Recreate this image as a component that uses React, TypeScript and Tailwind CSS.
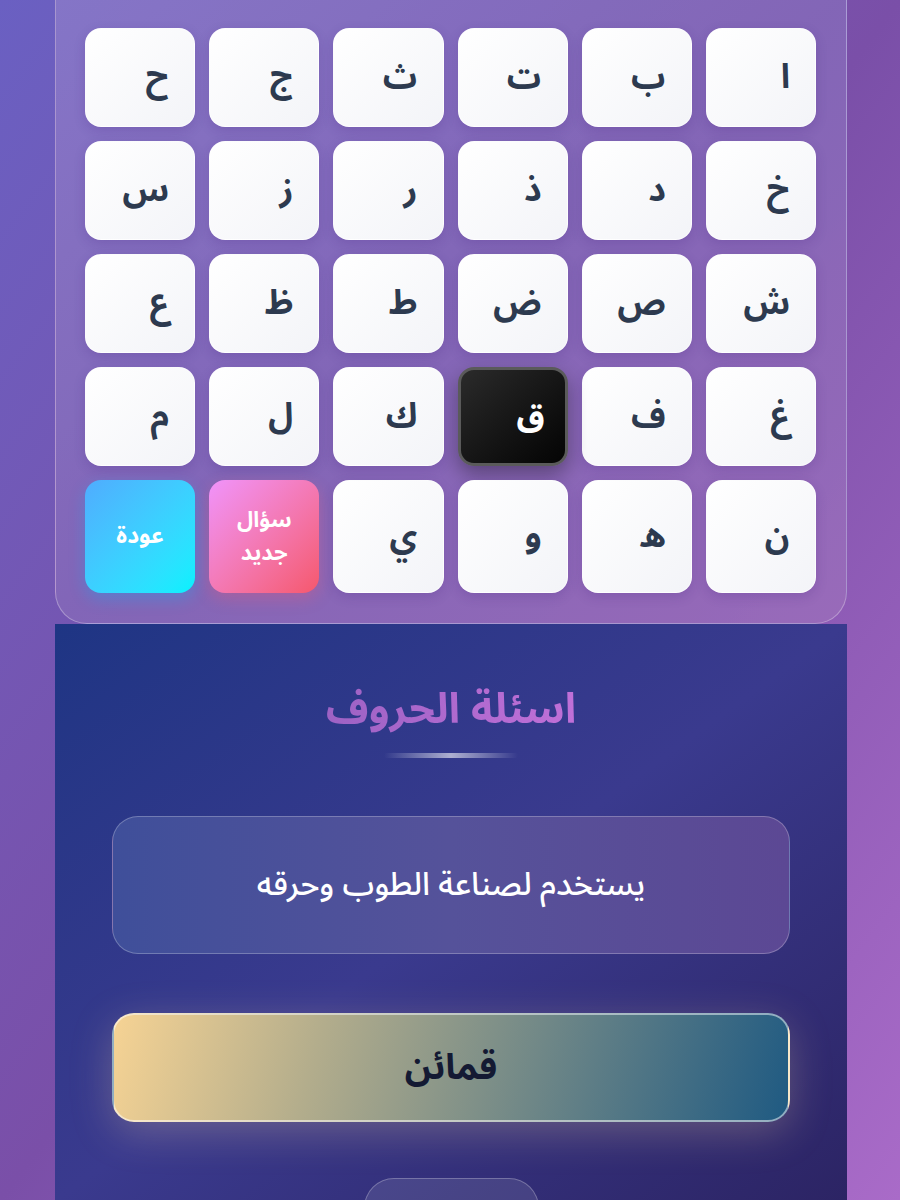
import React from 'react';

const rows: string[][] = [
  ['ا', 'ب', 'ت', 'ث', 'ج', 'ح'],
  ['خ', 'د', 'ذ', 'ر', 'ز', 'س'],
  ['ش', 'ص', 'ض', 'ط', 'ظ', 'ع'],
  ['غ', 'ف', 'ق', 'ك', 'ل', 'م'],
  ['ن', 'ھ', 'و', 'ي'],
];

const arabic = { fontFamily: '"Noto Sans Arabic", "Noto Kufi Arabic", "DejaVu Sans", sans-serif' };

function LetterKey({ letter, active, tall }: { letter: string; active?: boolean; tall?: boolean }) {
  const h = tall ? 'h-[113px]' : 'h-[99px]';
  if (active) {
    return (
      <button className={`flex ${h} items-center justify-start rounded-[16px] border-[3px] border-[#5a5a5a] bg-gradient-to-br from-[#2b2b2b] to-[#050505] pr-[20px] text-[34px] font-bold text-white shadow-[0_8px_20px_rgba(0,0,0,0.35)]`}>
        {letter}
      </button>
    );
  }
  return (
    <button className={`flex ${h} items-center justify-start rounded-[16px] border border-white/60 bg-gradient-to-br from-white to-[#f3f4f8] pr-[25px] text-[34px] font-bold text-[#2d3a4f] shadow-[0_4px_12px_rgba(60,30,120,0.18)]`}>
      {letter}
    </button>
  );
}

export default function App() {
  return (
    <div
      dir="rtl"
      style={arabic}
      className="h-[1200px] overflow-hidden bg-gradient-to-br from-[#6a60c2] via-[#7a4fa8] to-[#a96bc8] pl-[55px] pr-[53px]"
    >
      {/* letters board */}
      <div className="rounded-b-[32px] border-x border-b border-white/30 bg-gradient-to-br from-[#8878c8]/90 via-[#8468b8]/90 to-[#9a6cba]/90 pb-[30px] pl-[29px] pr-[30px] pt-[28px]">
        <div className="grid grid-cols-6 gap-[14px]">
          {rows.slice(0, 4).flat().map((l) => (
            <LetterKey key={l} letter={l} active={l === 'ق'} />
          ))}
          {rows[4].map((l) => (
            <LetterKey key={l} letter={l} tall />
          ))}
          <button className="flex h-[113px] flex-col items-center justify-center rounded-[16px] bg-gradient-to-br from-[#f093fb] to-[#f5576c] text-center text-[22px] font-bold text-white shadow-[0_6px_16px_rgba(245,87,108,0.3)]">
            <span className="block leading-[33px]">سؤال</span>
            <span className="block leading-[33px]">جديد</span>
          </button>
          <button className="flex h-[113px] items-center justify-center rounded-[16px] bg-gradient-to-br from-[#4facfe] to-[#00f2fe] text-[23px] font-bold text-white shadow-[0_6px_16px_rgba(0,180,254,0.3)]">
            عودة
          </button>
        </div>
      </div>

      {/* question area */}
      <div className="h-[577px] bg-gradient-to-br from-[#1e3584] via-[#3a3a8e] to-[#2c2464] px-[57px] pt-[60px]">
        <div className="flex flex-col items-center">
          <h1 className="bg-gradient-to-l from-[#c070d8] to-[#9d62c4] bg-clip-text text-[42px] font-bold leading-[52px] text-transparent">
            اسئلة الحروف
          </h1>
          <div className="mt-[17px] h-[5px] w-[134px] rounded-full bg-gradient-to-r from-transparent via-white/60 to-transparent" />
        </div>

        <div className="mt-[58px] flex h-[138px] items-center justify-center rounded-[26px] border border-white/25 bg-gradient-to-r from-[#3f4f9a] via-[#55529a] to-[#5c4894] text-[32px] font-medium text-white">
          يستخدم لصناعة الطوب وحرقه
        </div>

        <div className="mt-[59px] flex h-[109px] items-center justify-center rounded-[22px] border-2 border-white/50 bg-[linear-gradient(105deg,#f6d394_0%,#b3ad8c_30%,#7f9088_55%,#1f5a82_100%)] text-[36px] font-bold text-[#141a33] shadow-[0_10px_40px_rgba(255,220,160,0.25)]">
          قمائن
        </div>

        <div className="mt-[56px] flex justify-center">
          <div className="h-[60px] w-[175px] rounded-[40px] border border-white/25 bg-white/10" />
        </div>
      </div>
    </div>
  );
}
